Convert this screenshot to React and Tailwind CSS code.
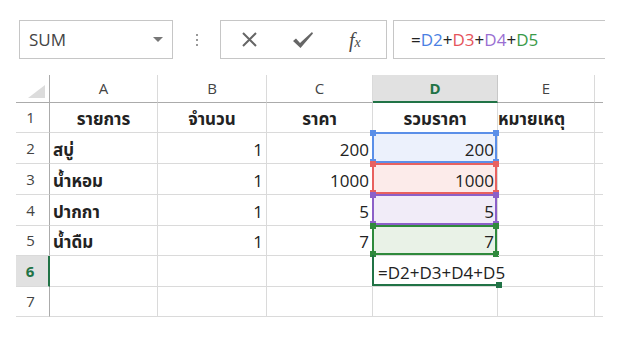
import React from "react"

const FONT = { fontFamily: '"Open Sans","Noto Sans","Noto Sans Thai",Tahoma,sans-serif' }

const COLS = ["A", "B", "C", "D", "E", ""]
const ROW_H = ["h-[30px]", "h-[31px]", "h-[31px]", "h-[31px]", "h-[30px]", "h-[31px]", "h-[30px]"]

const rows = [
    { a: "รายการ", b: "จำนวน", c: "ราคา", d: "รวมราคา", e: "หมายเหตุ", head: true },
    { a: "สบู่", b: "1", c: "200", d: "200" },
    { a: "น้ำหอม", b: "1", c: "1000", d: "1000" },
    { a: "ปากกา", b: "1", c: "5", d: "5" },
    { a: "น้ำดืม", b: "1", c: "7", d: "7" },
    { a: "", b: "", c: "", d: "", formula: true },
    { a: "", b: "", c: "", d: "" },
]

// colored range borders for D2..D5
const RANGES = [
    { border: "border-[#5b8fe8]", fill: "bg-[#ecf1fc]", sq: "bg-[#5b8fe8]" },
    { border: "border-[#e8615f]", fill: "bg-[#fcebea]", sq: "bg-[#e8615f]" },
    { border: "border-[#8c60c8]", fill: "bg-[#f1ecf8]", sq: "bg-[#8c60c8]" },
    { border: "border-[#2f8a3c]", fill: "bg-[#e9f2e7]", sq: "bg-[#2f8a3c]" },
]

function Corner({ className }) {
    return <span className={`absolute w-[6px] h-[6px] ${className}`} />
}

function RangeBox({ r }) {
    return (
        <div className={`absolute -left-[1px] -top-[1px] right-0 bottom-0 border-2 ${r.border}`}>
            <Corner className={`-left-[4px] -top-[4px] ${r.sq}`} />
            <Corner className={`-right-[4px] -top-[4px] ${r.sq}`} />
            <Corner className={`-left-[4px] -bottom-[4px] ${r.sq}`} />
            <Corner className={`-right-[4px] -bottom-[4px] ${r.sq}`} />
        </div>
    )
}

function Toolbar() {
    return (
        <div className="flex items-stretch h-[39px] mt-[20px] ml-[19px]">
            <div className="w-[154px] border border-[#c6c6c6] flex items-center justify-between pl-[9px] pr-[9px]">
                <span className="text-[17px] text-[#444]">SUM</span>
                <svg width="10" height="6" viewBox="0 0 10 6"><path d="M0 0 L10 0 L5 5 Z" fill="#777" /></svg>
            </div>
            <div className="w-[47px] flex flex-col items-center justify-center gap-[3px]">
                <span className="w-[2px] h-[2px] bg-[#999]" />
                <span className="w-[2px] h-[2px] bg-[#999]" />
                <span className="w-[2px] h-[2px] bg-[#999]" />
            </div>
            <div className="w-[167px] border border-[#c6c6c6] flex items-center">
                <svg className="ml-[20px]" width="17" height="17" viewBox="0 0 17 17">
                    <path d="M2 2 L15 15 M15 2 L2 15" stroke="#666" strokeWidth="2" fill="none" />
                </svg>
                <svg className="ml-[34px]" width="22" height="18" viewBox="0 0 22 18">
                    <path d="M1 10 L4 7.5 L8 12 L20 1 L21 2.5 L8.5 17 Z" fill="#666" />
                </svg>
                <span className="ml-[35px] text-[#4a4a4a] italic leading-none" style={{ fontFamily: '"Liberation Serif",serif' }}>
                    <span className="text-[20px]">f</span><span className="text-[14px]">x</span>
                </span>
            </div>
            <div className="w-[6px]" />
            <div className="w-[212px] border border-r-0 border-[#c6c6c6] flex items-center pl-[17px] text-[17px] text-[#222]">
                <span>=</span>
                <span className="text-[#4a7fe3]">D2</span>
                <span>+</span>
                <span className="text-[#e5545a]">D3</span>
                <span>+</span>
                <span className="text-[#9a6fd2]">D4</span>
                <span>+</span>
                <span className="text-[#3a9a48]">D5</span>
            </div>
        </div>
    )
}

function Sheet() {
    const cell = "border-r border-b border-[#dadada] relative flex items-end pb-[2px] px-[3px] text-[17px] text-[#222] leading-[22px]"
    return (
        <div className="ml-[16px] mt-[16px] grid grid-cols-[34px_108px_109px_106px_125px_97px_8px] w-[587px]">
            {/* header row */}
            <div className="h-[28px] border-r border-b border-[#ababab] relative">
                <svg className="absolute right-[4px] bottom-[4px]" width="17" height="13" viewBox="0 0 17 13">
                    <path d="M17 0 L17 13 L0 13 Z" fill="#dcdcdc" />
                </svg>
            </div>
            {COLS.map((c, i) => (
                <div
                    key={i}
                    className={`h-[28px] flex items-center justify-center text-[15px] ${
                        c === "D"
                            ? "bg-[#e1e1e1] border-b-2 border-b-[#217346] border-r border-r-[#c8c8c8] text-[#217346] font-bold"
                            : "border-b border-b-[#ababab] border-r border-r-[#dadada] text-[#444]"
                    } ${i === 5 ? "border-r-0" : ""}`}
                >
                    {c}
                </div>
            ))}

            {rows.map((r, i) => {
                const h = ROW_H[i]
                const active = i === 5
                const range = i >= 1 && i <= 4 ? RANGES[i - 1] : null
                return (
                    <React.Fragment key={i}>
                        <div
                            className={`${h} flex items-center justify-center pr-[4px] text-[15px] border-b border-[#dadada] ${
                                active
                                    ? "bg-[#e1e1e1] border-r-2 border-r-[#217346] text-[#217346] font-bold"
                                    : "border-r border-r-[#ababab] text-[#444]"
                            }`}
                        >
                            {i + 1}
                        </div>
                        <div className={`${cell} ${h} font-bold ${r.head ? "justify-center" : ""}`}>{r.a}</div>
                        <div className={`${cell} ${h} ${r.head ? "justify-center font-bold" : "justify-end"}`}>{r.b}</div>
                        <div className={`${cell} ${h} ${r.head ? "justify-center font-bold" : "justify-end"}`}>{r.c}</div>
                        <div
                            className={`${cell} ${h} ${range ? range.fill : ""} ${r.head ? "justify-center font-bold" : "justify-end"} ${
                                active ? "border-r-0 z-10 justify-start" : ""
                            }`}
                        >
                            {range && <RangeBox r={range} />}
                            {active && (
                                <>
                                    <div className="absolute -left-[1px] -top-[1px] right-0 bottom-0 border-l-2 border-b-2 border-[#217346]">
                                        <Corner className="-right-[4px] -bottom-[4px] bg-[#217346]" />
                                    </div>
                                    <span className="relative whitespace-nowrap pl-[2px]">=D2+D3+D4+D5</span>
                                </>
                            )}
                            {!active && <span className="relative">{r.d}</span>}
                        </div>
                        <div className={`${cell} ${h} pl-0 ${r.head ? "font-bold whitespace-nowrap" : ""}`}>{r.e}</div>
                        <div className={`${h} border-b border-[#dadada]`} />
                    </React.Fragment>
                )
            })}
        </div>
    )
}

export default function App() {
    return (
        <div className="w-[620px] h-[342px] bg-white overflow-hidden" style={FONT}>
            <Toolbar />
            <Sheet />
        </div>
    )
}
